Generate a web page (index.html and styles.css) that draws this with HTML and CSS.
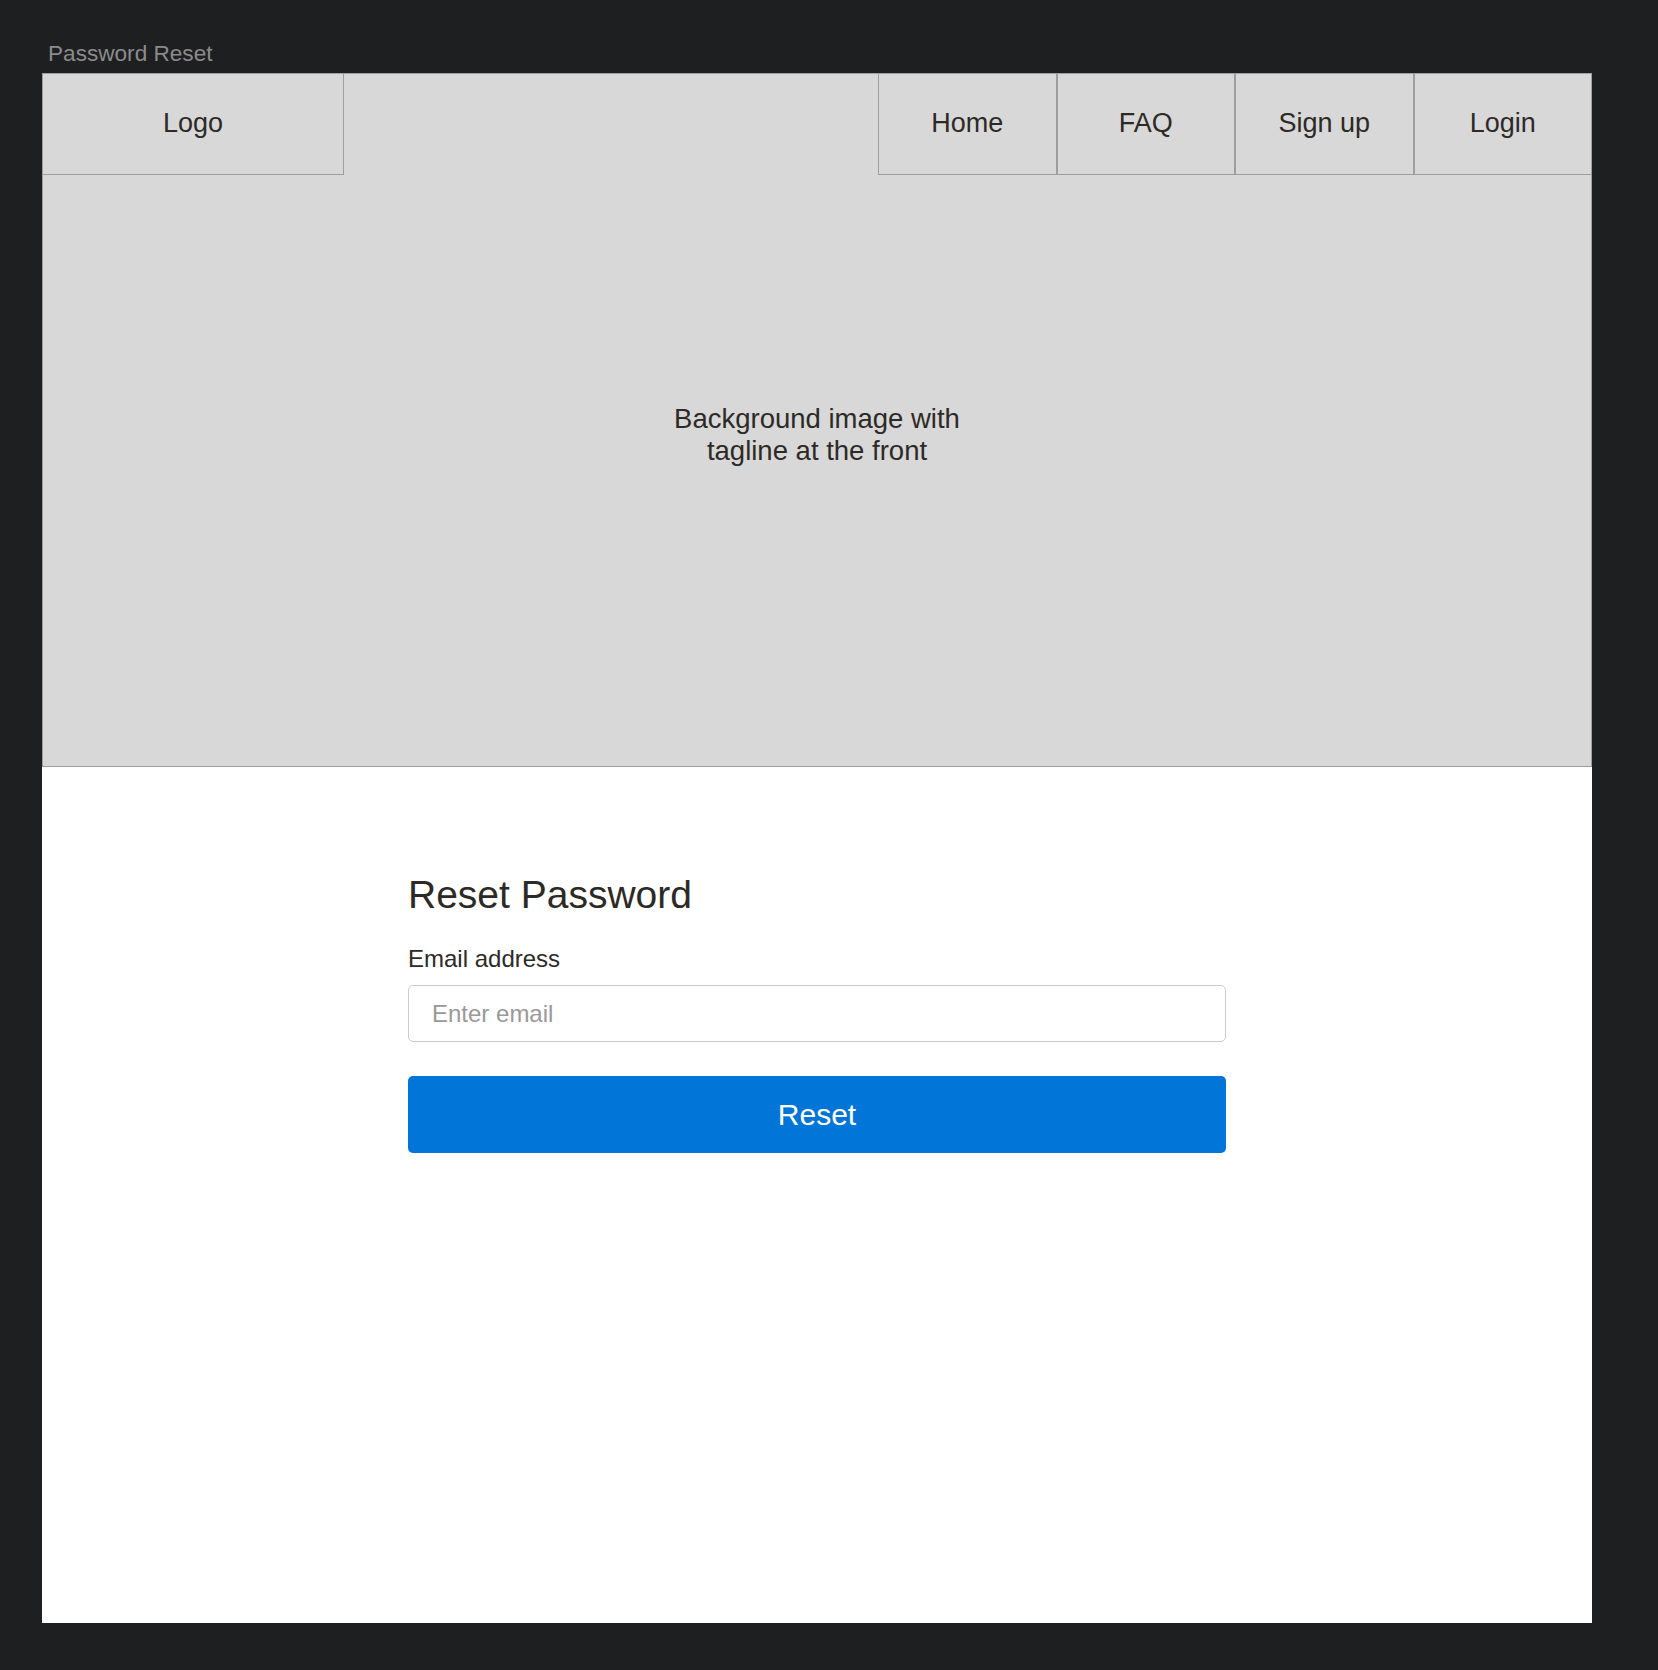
FILE: index.html
```html
<!DOCTYPE html>
<html lang="en">

<head>
    <meta charset="UTF-8">
    <meta name="viewport" content="width=device-width, initial-scale=1.0">
    <title>Password Reset</title>
    <link rel="stylesheet" href="styles.css">
</head>

<body>
    <div class="page-title">Password Reset</div>

    <div class="frame">
        <!-- Cabecera con imagen de fondo -->
        <div class="hero">
            <div class="topbar">
                <div class="logo-box">Logo</div>
                <nav class="nav">
                    <a class="nav-item" href="#">Home</a>
                    <a class="nav-item" href="#">FAQ</a>
                    <a class="nav-item" href="#">Sign up</a>
                    <a class="nav-item" href="#">Login</a>
                </nav>
            </div>
            <p class="tagline">Background image with<br>tagline at the front</p>
        </div>

        <!-- Formulario -->
        <div class="form-area">
            <form class="reset-form" onsubmit="return false">
                <h1>Reset Password</h1>
                <label for="email">Email address</label>
                <input type="email" id="email" placeholder="Enter email">
                <button type="submit">Reset</button>
            </form>
        </div>
    </div>
</body>

</html>
```

FILE: styles.css
```css
body {
    font-family: 'Liberation Sans', Arial, sans-serif;
    margin: 0;
    padding: 41px 0 0 42px;
    background-color: #1e1f21;
    color: #2d2a26;
}

.page-title {
    font-size: 22.6px;
    line-height: 25px;
    color: #8b8b8b;
    margin: 0 0 7px 6px;
}

.frame {
    width: 1550px;
    height: 1550px;
    background-color: #fff;
}

/* Cabecera */
.hero {
    box-sizing: border-box;
    height: 694px;
    background-color: #d8d8d8;
    border: 1px solid #9e9e9e;
    text-align: center;
}

.topbar {
    display: flex;
    justify-content: space-between;
    margin: -1px -1px 0;
}

.logo-box,
.nav-item {
    box-sizing: border-box;
    height: 102px;
    display: flex;
    align-items: center;
    justify-content: center;
    border: 1px solid #9e9e9e;
    font-size: 27px;
    color: #2d2a26;
    text-decoration: none;
    padding-bottom: 1px;
}

.logo-box {
    width: 302px;
}

.nav {
    display: flex;
}

.nav-item {
    width: 178.5px;
}

.tagline {
    margin: 228px 0 0;
    font-size: 27.5px;
    line-height: 32px;
}

/* Formulario */
.form-area {
    display: flex;
    justify-content: center;
    padding-top: 105px;
}

.reset-form {
    width: 818px;
    display: flex;
    flex-direction: column;
}

.reset-form h1 {
    margin: 0 0 28px;
    font-size: 39px;
    line-height: 45px;
    font-weight: normal;
}

.reset-form label {
    font-size: 24px;
    line-height: 28px;
    margin-bottom: 12px;
}

.reset-form input {
    box-sizing: border-box;
    height: 57px;
    padding: 0 23px;
    border: 1px solid #cdcdcd;
    border-radius: 5px;
    font-family: inherit;
    font-size: 24px;
    color: #2d2a26;
    margin-bottom: 34px;
}

.reset-form input::placeholder {
    color: #999;
}

.reset-form button {
    height: 77px;
    border: none;
    border-radius: 5px;
    background-color: #0275d8;
    color: #fff;
    font-family: inherit;
    font-size: 30px;
    cursor: pointer;
}
```
